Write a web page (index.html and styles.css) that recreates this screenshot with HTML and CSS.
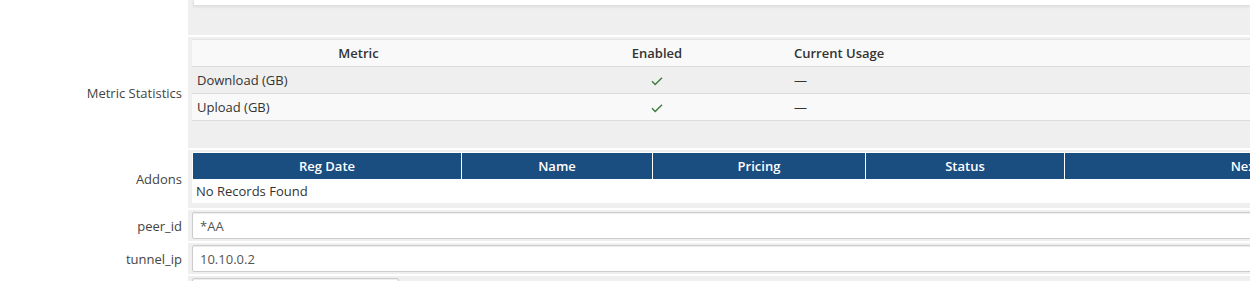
FILE: index.html
```html
<!DOCTYPE html>
<html lang="en">

<head>
	<meta charset="utf-8">
	<title>Service Details</title>
	<link rel="stylesheet" href="styles.css">
</head>

<body>
	<div class="form">
		<div class="fieldlabel"></div>
		<div class="fieldarea top">
			<div class="panelend"></div>
		</div>

		<div class="fieldlabel">Metric Statistics</div>
		<div class="fieldarea metrics">
			<table class="metrictable">
				<colgroup>
					<col class="c-metric">
					<col class="c-enabled">
					<col>
				</colgroup>
				<tr>
					<th>Metric</th>
					<th>Enabled</th>
					<th class="left">Current Usage</th>
				</tr>
				<tr class="odd">
					<td>Download (GB)</td>
					<td class="center">
						<svg class="check" width="12" height="9" viewBox="0 0 12 9"><polyline points="1,4.2 4.2,7.4 11,0.8" /></svg>
					</td>
					<td>&mdash;</td>
				</tr>
				<tr>
					<td>Upload (GB)</td>
					<td class="center">
						<svg class="check" width="12" height="9" viewBox="0 0 12 9"><polyline points="1,4.2 4.2,7.4 11,0.8" /></svg>
					</td>
					<td>&mdash;</td>
				</tr>
			</table>
		</div>

		<div class="fieldlabel">Addons</div>
		<div class="fieldarea addons">
			<table class="datatable">
				<tr>
					<th class="w-date">Reg Date</th>
					<th class="w-name">Name</th>
					<th class="w-price">Pricing</th>
					<th class="w-status">Status</th>
					<th>Next Due Date</th>
				</tr>
				<tr>
					<td colspan="5">No Records Found</td>
				</tr>
			</table>
		</div>

		<div class="fieldlabel">peer_id</div>
		<div class="fieldarea"><input type="text" class="wide" value="*AA"></div>

		<div class="fieldlabel">tunnel_ip</div>
		<div class="fieldarea"><input type="text" class="wide" value="10.10.0.2"></div>

		<div class="fieldlabel"></div>
		<div class="fieldarea"><input type="text" class="short" value=""></div>
	</div>
</body>

</html>
```

FILE: styles.css
```css
body {
	font-family: "Open Sans", sans-serif;
	font-size: 13px;
	color: #333;
	background: #fff;
	margin: 0;
	overflow: hidden;
}

/* label / field grid, 2px white rule between rows */
.form {
	display: grid;
	grid-template-columns: 188px 1fr;
	row-gap: 2px;
}

.fieldlabel {
	display: flex;
	align-items: center;
	justify-content: flex-end;
	padding-right: 6px;
	color: #444;
	white-space: nowrap;
}

.fieldarea {
	background: #efefef;
	padding: 2px 0 2px 4px;
	overflow: hidden;
	min-width: 0;
}

.fieldarea.top {
	height: 35px;
	box-sizing: border-box;
	padding: 0 0 0 5px;
}

.panelend {
	height: 5px;
	background: #fff;
	border-left: 1px solid #e2e2e2;
	box-shadow: 0 2px 3px rgba(0, 0, 0, 0.08);
}

.fieldarea.metrics {
	padding: 2px 0 27px 4px;
}

.fieldarea.addons {
	padding: 2px 0 5px 4px;
}

/* metric statistics */
.metrictable {
	width: 1150px;
	border-collapse: collapse;
	border-top: 1px solid #e4e4e4;
	table-layout: fixed;
}

.metrictable .c-metric {
	width: 333px;
}

.metrictable .c-enabled {
	width: 264px;
}

.metrictable th,
.metrictable td {
	height: 26px;
	padding: 0 5px;
	border-bottom: 1px solid #ddd;
	background: #f9f9f9;
	text-align: left;
}

.metrictable th {
	font-weight: 600;
	text-align: center;
}

.metrictable th.left {
	text-align: left;
}

.metrictable tr.odd td {
	background: #efefef;
}

.metrictable td.center {
	text-align: center;
}

.check {
	display: inline-block;
	vertical-align: middle;
	fill: none;
	stroke: #3b7a3b;
	stroke-width: 1.4;
}

/* addons */
.datatable {
	width: 1297px;
	background: #fff;
	border-collapse: separate;
	border-spacing: 1px;
	table-layout: fixed;
}

.datatable th {
	height: 26px;
	padding: 0;
	background: #1a4d80;
	color: #fff;
	font-weight: 600;
	text-align: center;
	white-space: nowrap;
}

.datatable td {
	height: 22px;
	padding: 0 3px;
	background: #fff;
}

.w-date {
	width: 268px;
}

.w-name {
	width: 190px;
}

.w-price {
	width: 212px;
}

.w-status {
	width: 198px;
}

/* inputs */
input {
	box-sizing: border-box;
	display: block;
	height: 27px;
	padding: 0 7px;
	border: 1px solid #ccc;
	border-radius: 2px;
	box-shadow: inset 0 1px 1px rgba(0, 0, 0, 0.075);
	font-family: "Open Sans", sans-serif;
	font-size: 13px;
	color: #555;
	background: #fff;
	margin: 0;
}

input.wide {
	width: 1200px;
}

input.short {
	width: 207px;
}
```
